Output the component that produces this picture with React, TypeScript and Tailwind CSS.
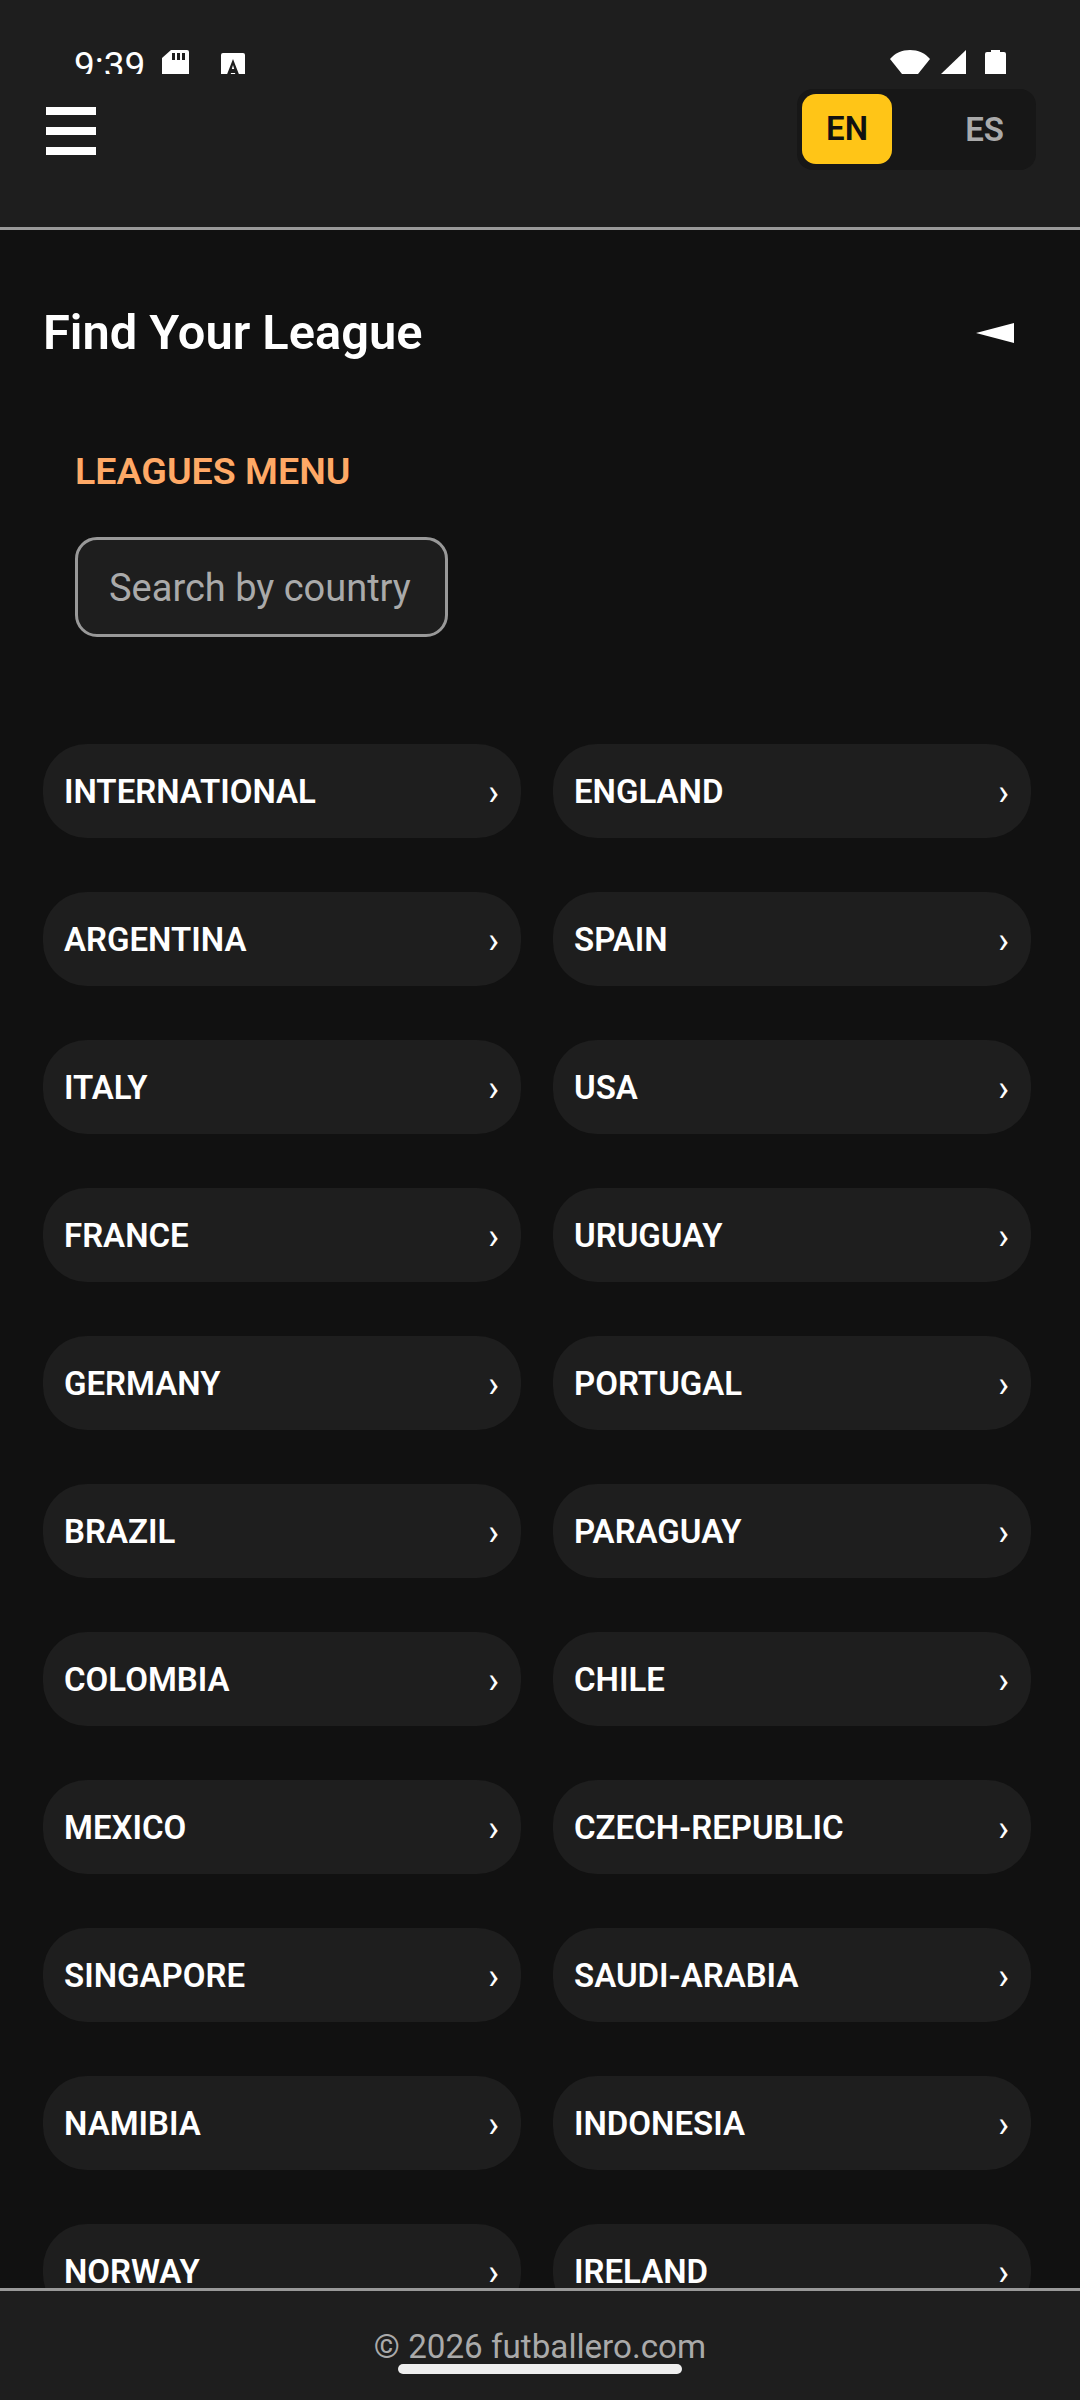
const rows = [
  ["INTERNATIONAL", "ENGLAND"],
  ["ARGENTINA", "SPAIN"],
  ["ITALY", "USA"],
  ["FRANCE", "URUGUAY"],
  ["GERMANY", "PORTUGAL"],
  ["BRAZIL", "PARAGUAY"],
  ["COLOMBIA", "CHILE"],
  ["MEXICO", "CZECH-REPUBLIC"],
  ["SINGAPORE", "SAUDI-ARABIA"],
  ["NAMIBIA", "INDONESIA"],
  ["NORWAY", "IRELAND"],
];

function StatusBar() {
  return (
    <div className="h-[74px] overflow-hidden pl-[74px] pr-[74px] pt-[50px] flex items-start text-white">
      <span className="text-[37px] leading-[38px] w-[88px] shrink-0 -mt-[3px]">9:39</span>
      <svg width="27" height="24" viewBox="0 0 27 24" className="shrink-0">
        <path d="M9 0H25a2 2 0 0 1 2 2V24H0V8Z" fill="#fff" />
        <rect x="10" y="3" width="3" height="7" fill="#1e1e1e" />
        <rect x="15" y="3" width="3" height="7" fill="#1e1e1e" />
        <rect x="20" y="3" width="3" height="7" fill="#1e1e1e" />
      </svg>
      <svg width="24" height="24" viewBox="0 0 24 24" className="ml-[32px] mt-[3px] shrink-0">
        <rect width="24" height="24" rx="2" fill="#fff" />
        <path d="M12 6 5 24h4l1-4h4l1 4h4Z M12 12l1.2 4h-2.4Z" fill="#1e1e1e" fillRule="evenodd" />
      </svg>
      <div className="flex-1" />
      <svg width="40" height="24" viewBox="0 0 40 24" className="shrink-0">
        <path d="M0 9C5 3 12 0 20 0s15 3 20 9L28 24H12Z" fill="#fff" />
      </svg>
      <svg width="26" height="24" viewBox="0 0 26 24" className="ml-[11px] shrink-0">
        <path d="M25 0V24H0Z" fill="#fff" />
      </svg>
      <svg width="21" height="26" viewBox="0 0 21 26" className="ml-[18px] shrink-0 -mt-[1px]">
        <path d="M6 3V1h9v2h4a2 2 0 0 1 2 2V26H0V5a2 2 0 0 1 2-2Z" fill="#fff" />
      </svg>
    </div>
  );
}

function Pill({ name }: { name: string }) {
  return (
    <div className="h-[94px] rounded-[44px] bg-[#1e1e1e] pl-[21px] pr-[22px] flex items-center justify-between text-white">
      <span className="text-[33px] font-semibold leading-[38px] mt-[2px]">{name}</span>
      <span className="text-[36px] leading-[38px] mt-[4px]">›</span>
    </div>
  );
}

export default function App() {
  return (
    <div
      className="h-[2400px] w-[1080px] overflow-hidden flex flex-col bg-[#111111]"
      style={{ fontFamily: "Roboto, sans-serif" }}
    >
      <header className="h-[230px] shrink-0 bg-[#1e1e1e] border-b-[3px] border-[#999999]">
        <StatusBar />
        <div className="flex items-start justify-between pl-[46px] pr-[44px] pt-[15px]">
          <div className="mt-[18px] flex flex-col gap-[12px] w-[50px]">
            <div className="h-[8px] bg-white" />
            <div className="h-[8px] bg-white" />
            <div className="h-[8px] bg-white" />
          </div>
          <div className="w-[239px] h-[81px] rounded-[16px] bg-[#171717] p-[5px] flex items-stretch">
            <div className="w-[90px] h-[70px] rounded-[14px] bg-[#ffc517] text-[#111111] text-[33px] font-semibold flex items-center justify-center">
              EN
            </div>
            <div className="flex-1 text-[#aaaaaa] text-[33px] font-semibold flex items-center justify-end pr-[27px]">
              ES
            </div>
          </div>
        </div>
      </header>

      <main className="flex-1 min-h-0 overflow-hidden pl-[43px] pr-[49px]">
        <div className="flex items-center justify-between pt-[73px] pr-[3px]">
          <h1 className="text-[48.8px] leading-[60px] font-semibold text-white">Find Your League</h1>
          <svg width="38" height="20" viewBox="0 0 38 20" className="mr-[14px]">
            <path d="M0 10 38 0V20Z" fill="#fff" />
          </svg>
        </div>
        <div className="pl-[32px] pt-[87px]">
          <h2 className="text-[37.6px] leading-[42px] font-semibold text-[#ffa966]">LEAGUES MENU</h2>
          <div className="mt-[45px] w-[373px] h-[100px] rounded-[22px] border-[3px] border-[#999999] bg-[#1e1e1e] flex items-center pl-[31px] pt-[2px] text-[38px] text-[#aaaaaa]">
            Search by country
          </div>
        </div>
        <div className="mt-[107px] grid grid-cols-2 gap-x-[32px] gap-y-[54px]">
          {rows.flat().map((name) => (
            <Pill key={name} name={name} />
          ))}
        </div>
      </main>

      <footer className="relative h-[112px] shrink-0 bg-[#1e1e1e] border-t-[3px] border-[#999999] flex justify-center pt-[37px] text-[33.2px] leading-[38px] text-[#aaaaaa]">
        © 2026 futballero.com
        <div className="absolute left-[398px] top-[73px] h-[10px] w-[284px] rounded-[5px] bg-[#eeeeee]" />
      </footer>
    </div>
  );
}
